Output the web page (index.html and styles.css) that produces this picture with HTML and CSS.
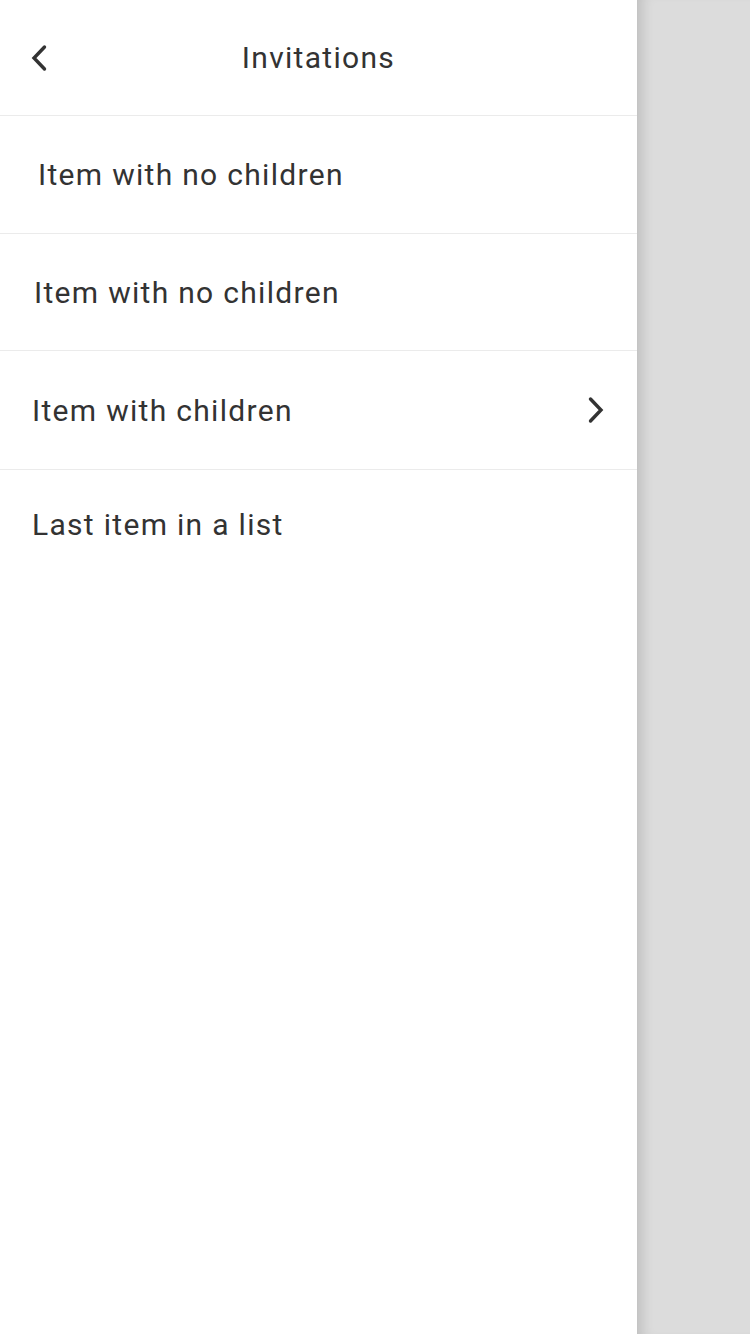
FILE: index.html
```html
<!DOCTYPE html>
<html>
<head>
<meta charset="utf-8">
<link rel="stylesheet" href="styles.css">
</head>
<body>
<div class="screen">
  <aside class="panel">
    <header class="header">
      <button class="back" aria-label="Back">
        <svg width="20" height="28" viewBox="0 0 20 28"><path d="M15.5 3 L5 14 L15.5 25" fill="none" stroke="#333" stroke-width="3.4" stroke-linecap="round" stroke-linejoin="miter"/></svg>
      </button>
      <h1 class="title">Invitations</h1>
    </header>
    <ul class="list">
      <li class="item item-a">Item with no children</li>
      <li class="item item-b">Item with no children</li>
      <li class="item item-c"><span>Item with children</span>
        <svg class="chev" width="20" height="28" viewBox="0 0 20 28"><path d="M4.5 3 L15 14 L4.5 25" fill="none" stroke="#333" stroke-width="3.4" stroke-linecap="round" stroke-linejoin="miter"/></svg>
      </li>
      <li class="item item-d last">Last item in a list</li>
    </ul>
  </aside>
  <div class="overlay"></div>
</div>
</body>
</html>
```

FILE: styles.css
```css
* { box-sizing: border-box; }
html, body { margin: 0; padding: 0; }
body {
  width: 750px;
  height: 1334px;
  font-family: Roboto, "Noto Sans", sans-serif;
  color: #333;
  overflow: hidden;
}
.screen {
  display: flex;
  height: 1334px;
}
.panel {
  width: 637px;
  background: #fff;
  flex: none;
}
.overlay {
  flex: 1;
  background: #dcdcdc;
  box-shadow: inset 1px 0 0 #c4c4c4, inset 14px 0 12px -8px rgba(0,0,0,0.12);
}
.header {
  height: 116px;
  border-bottom: 1px solid #ebebeb;
  display: flex;
  align-items: center;
  position: relative;
}
.back {
  background: none;
  border: 0;
  padding: 0;
  margin-left: 29px;
  display: flex;
  position: relative;
  z-index: 1;
}
.title {
  position: absolute;
  left: 0;
  right: 0;
  top: 40px;
  text-align: center;
  margin: 0;
  font-size: 30px;
  line-height: 36px;
  font-weight: 400;
  letter-spacing: 1.3px;
}
.list {
  list-style: none;
  margin: 0;
  padding: 0;
}
.item {
  border-bottom: 1px solid #ebebeb;
  display: flex;
  align-items: center;
  justify-content: space-between;
  font-size: 30px;
  letter-spacing: 1.3px;
  padding-right: 31px;
}
.item-a { padding-left: 38px; height: 118px; }
.item-b { padding-left: 34px; height: 117px; }
.item-c { padding-left: 32px; height: 119px; }
.item-d { padding-left: 32px; height: 108px; }
.last { border-bottom: 0; }
.chev { flex: none; }
```
